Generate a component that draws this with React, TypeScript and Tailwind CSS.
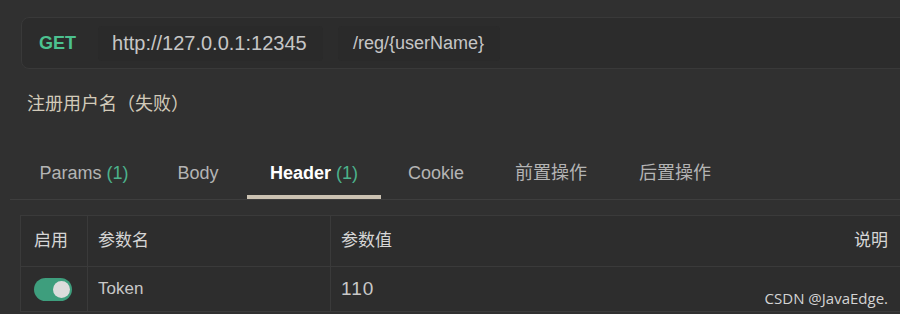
import React from 'react';

const tabs = [
    { label: 'Params', count: 1, w: 'w-[130px]' },
    { label: 'Body', w: 'w-[98px]' },
    { label: 'Header', count: 1, w: 'w-[134px]', active: true },
    { label: 'Cookie', w: 'w-[110px]' },
    { label: '前置操作', w: 'w-[120px]' },
    { label: '后置操作', w: 'w-[128px]' },
];

const font = "font-['Liberation_Sans','Noto_Sans_CJK_SC',sans-serif]";

export default function App() {
    return (
        <div className={`relative w-[900px] h-[314px] overflow-hidden bg-[#303030] ${font}`}>
            {/* url bar */}
            <div className="ml-[21px] mt-[17px] w-[900px] h-[52px] flex items-center rounded-l-lg border border-[#393939] bg-[#2c2c2c]">
                <span className="ml-[17px] text-[18px] font-bold text-[#4cc190] leading-none">GET</span>
                <div className="ml-[22px] h-[35px] w-[225px] flex items-center px-[14px] rounded bg-[#2a2a2a] text-[20px] text-[#c6c6c6]">
                    http://127.0.0.1:12345
                </div>
                <div className="ml-[15px] h-[35px] w-[162px] flex items-center px-[15px] rounded bg-[#2a2a2a] text-[18px] text-[#c6c6c6]">
                    /reg/{'{userName}'}
                </div>
            </div>

            <div className="ml-[27px] mt-[21px] text-[18px] leading-[28px] text-[#d2cab9]">注册用户名（失败）</div>

            {/* tabs */}
            <div className="mt-[33px] ml-[10px] border-b border-[#3e3e3e]">
                <div className="ml-[9px] flex">
                    {tabs.map((t) => (
                        <div
                            key={t.label}
                            className={`${t.w} h-[48px] flex items-center justify-center border-b-4 text-[18px] ${
                                t.active ? 'border-[#cbc2b2] text-white font-semibold' : 'border-transparent text-[#b4b4b4]'
                            }`}
                        >
                            <span>
                                {t.label}
                                {t.count !== undefined && <span className="text-[#4cb28c] font-normal"> ({t.count})</span>}
                            </span>
                        </div>
                    ))}
                </div>
            </div>

            {/* table */}
            <div className="ml-[20px] mt-[15px] w-[900px] border border-[#3a3a3a] bg-[#2d2d2d] text-[17px]">
                <div className="flex h-[51px] border-b border-[#3a3a3a] text-[#d6d6d6]">
                    <div className="w-[67px] flex items-center pl-[13px] border-r border-[#3a3a3a]">启用</div>
                    <div className="w-[243px] flex items-center pl-[10px] border-r border-[#3a3a3a]">参数名</div>
                    <div className="flex-1 flex items-center pl-[10px]">参数值</div>
                    <div className="flex items-center pr-[31px]">说明</div>
                </div>
                <div className="flex h-[44px] text-[#c8c8c8]">
                    <div className="w-[67px] flex items-center pl-[13px] border-r border-[#3a3a3a]">
                        <div className="w-[38px] h-[23px] rounded-full bg-[#3e9e7d] flex items-center justify-end pr-[2px]">
                            <div className="w-[17px] h-[17px] rounded-full bg-[#dcdcdc]" />
                        </div>
                    </div>
                    <div className="w-[243px] flex items-center pl-[10px] border-r border-[#3a3a3a]">Token</div>
                    <div className="flex-1 flex items-center pl-[10px] text-[19px] tracking-[1px]">110</div>
                </div>
            </div>

            <span className="absolute right-[12px] top-[287px] font-['Open_Sans',sans-serif] text-[15px] text-[#d4d4d4]">
                CSDN @JavaEdge.
            </span>
        </div>
    );
}
